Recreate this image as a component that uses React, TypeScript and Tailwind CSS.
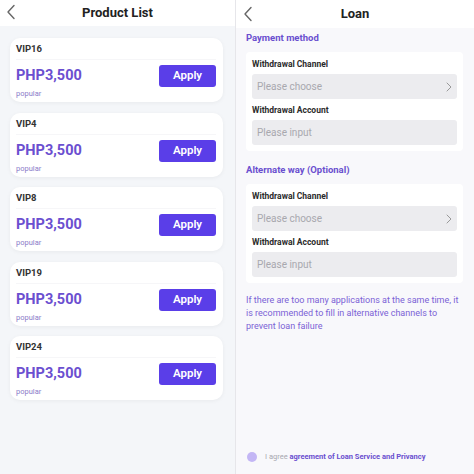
import React from "react";

const Chevron = ({ className = "" }: { className?: string }) => (
  <svg width="10" height="16" viewBox="0 0 10 16" className={className} fill="none">
    <path d="M8 1.5 L2 8 L8 14.5" stroke="#666" strokeWidth="1.4" strokeLinecap="round" strokeLinejoin="round" />
  </svg>
);

const products = ["VIP16", "VIP4", "VIP8", "VIP19", "VIP24"];

function ProductCard({ name }: { name: string }) {
  return (
    <div className="bg-white rounded-[10px] shadow-[0_1px_4px_rgba(0,0,0,0.05)] pl-[6px] pr-[7px] pt-[4px] pb-[3px] h-[64px] flex flex-col">
      <div className="text-[9.5px] font-bold text-[#333] leading-[12px] pt-[1px] pb-[4px] border-b border-[#f6f6f8]">{name}</div>
      <div className="flex items-center justify-between mt-[5px]">
        <div className="text-[14.5px] font-bold text-[#6b4fd0] leading-[20px]">PHP3,500</div>
        <div className="w-[57px] h-[22px] rounded-[3px] bg-[#5a3ee8] text-white text-[11.5px] font-semibold flex items-center justify-center">Apply</div>
      </div>
      <div className="text-[7.5px] text-[#8b7cc9] leading-[10px] mt-[2px]">popular</div>
    </div>
  );
}

function Field({ label, placeholder, arrow }: { label: string; placeholder: string; arrow?: boolean }) {
  return (
    <div>
      <div className="text-[8.5px] font-bold text-[#2b2b2b] leading-[12px] mb-[4px]">{label}</div>
      <div className="h-[25px] bg-[#ececef] rounded-[3px] flex items-center justify-between px-[5px]">
        <span className="text-[10px] text-[#a8a8ae]">{placeholder}</span>
        {arrow && (
          <svg width="6" height="10" viewBox="0 0 6 10" fill="none">
            <path d="M1 1 L5 5 L1 9" stroke="#999" strokeWidth="1" strokeLinecap="round" strokeLinejoin="round" />
          </svg>
        )}
      </div>
    </div>
  );
}

function PayCard() {
  return (
    <div className="bg-white rounded-[4px] px-[6px] pt-[6px] pb-[6px] flex flex-col gap-[5px]">
      <Field label="Withdrawal Channel" placeholder="Please choose" arrow />
      <Field label="Withdrawal Account" placeholder="Please input" />
    </div>
  );
}

export default function App() {
  return (
    <div className="w-[474px] h-[474px] flex bg-white overflow-hidden" style={{ fontFamily: "Roboto, Inter, 'Noto Sans', sans-serif" }}>
      {/* Left */}
      <div className="w-[236px] h-full flex flex-col border-r border-[#e6e6ea]">
        <div className="h-[26px] bg-white flex items-center relative shrink-0">
          <Chevron className="absolute left-[6px] top-[4px]" />
          <div className="w-full text-center text-[13px] font-bold text-[#222]">Product List</div>
        </div>
        <div className="flex-1 bg-[#f4f6f9] pt-[12px] pl-[10px] pr-[12px] flex flex-col gap-[10.5px]">
          {products.map((p) => (
            <ProductCard key={p} name={p} />
          ))}
        </div>
      </div>
      {/* Right */}
      <div className="flex-1 h-full flex flex-col">
        <div className="h-[28px] bg-white flex items-center relative shrink-0">
          <Chevron className="absolute left-[7px] top-[6px]" />
          <div className="w-full text-center text-[13px] font-bold text-[#222]">Loan</div>
        </div>
        <div className="flex-1 bg-[#f8f8fb] pl-[10px] pr-[11px] pt-[4px] flex flex-col">
          <div className="text-[9.5px] font-bold text-[#6a4fcf] leading-[12px]">Payment method</div>
          <div className="mt-[8px]">
            <PayCard />
          </div>
          <div className="text-[9.5px] font-bold text-[#6a4fcf] leading-[12px] mt-[13px]">Alternate way (Optional)</div>
          <div className="mt-[8px]">
            <PayCard />
          </div>
          <div className="text-[9px] text-[#7b62d6] leading-[13px] mt-[11px] mr-[-3px]">
            If there are too many applications at the same time, it is recommended to fill in alternative channels to prevent loan failure
          </div>
          <div className="flex-1" />
          <div className="flex items-center gap-[8px] mb-[12px] pl-[1px]">
            <div className="w-[10px] h-[10px] rounded-full bg-[#c3b6f5]" />
            <div className="text-[7.5px] leading-[10px]">
              <span className="text-[#a8a8b0]">I agree </span>
              <span className="font-bold text-[#6a4fcf]">agreement of Loan Service and Privancy</span>
            </div>
          </div>
        </div>
      </div>
    </div>
  );
}
